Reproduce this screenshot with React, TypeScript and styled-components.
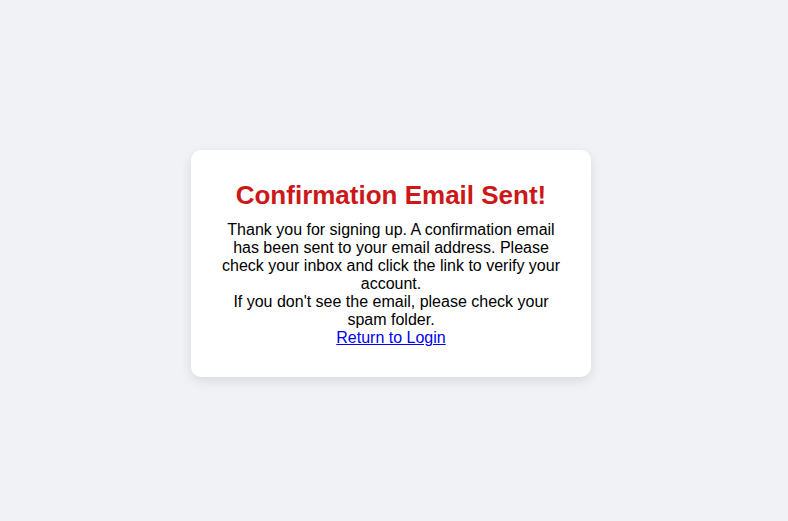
import React from 'react'
import styled, { createGlobalStyle } from 'styled-components'

const GlobalStyle = createGlobalStyle`
    html, body {
        margin: 0;
        padding: 0;
        background: #f0f2f5;
        font-family: "Liberation Sans", Arial, sans-serif;
    }
`

const Page = styled.div`
    display: flex;
    align-items: center;
    justify-content: center;
    box-sizing: border-box;
    min-height: 100vh;
    padding: 6px 6px 0 0;
`

const Card = styled.div`
    width: 400px;
    box-sizing: border-box;
    padding: 30px;
    background: #fff;
    border-radius: 10px;
    box-shadow: 0 4px 12px rgba(0, 0, 0, 0.1);
    text-align: center;
`

const Title = styled.h2`
    margin: 0 0 10px;
    font-size: 26px;
    font-weight: bold;
    color: #cc1818;
`

const Message = styled.p`
    margin: 0;
    font-size: 16px;
    color: #000;
`

const LoginLink = styled.a`
    color: #0000ee;
    text-decoration: underline;
`

export default function App() {
	return (
		<>
			<GlobalStyle/>
			<Page>
				<Card>
					<Title>Confirmation Email Sent!</Title>
					<Message>
						Thank you for signing up. A confirmation email has been sent to your email address. Please check your inbox and click the link to verify your account.
						<br/>
						If you don't see the email, please check your spam folder.
						<br/>
						<LoginLink href="#">Return to Login</LoginLink>
					</Message>
				</Card>
			</Page>
		</>
	)
}
